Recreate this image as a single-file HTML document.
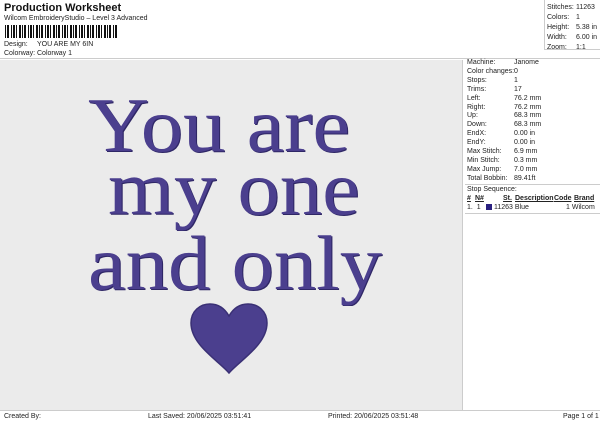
<!DOCTYPE html>
<html><head><style>
*{margin:0;padding:0;box-sizing:border-box}
body{width:600px;height:424px;background:#fff;font-family:"Liberation Sans",sans-serif;font-size:7px;color:#222;position:relative;overflow:hidden}
.a{position:absolute;white-space:nowrap}
#design{position:absolute;left:0;top:60px;width:463px;height:350px;background:#ebebeb;border-right:1px solid #ccc}
.t{position:absolute;font-family:"Liberation Serif",serif;font-size:77px;color:#4b3f8e;white-space:nowrap;line-height:1;text-shadow:1px 1px 0 #2f2766;transform:scaleX(1.1);transform-origin:0 0}
</style></head><body>
<div class="a" style="left:4px;top:2px;font-size:11px;font-weight:bold;color:#111">Production Worksheet</div>
<div class="a" style="left:4px;top:15px">Wilcom EmbroideryStudio – Level 3 Advanced</div>
<svg class="a" style="left:5px;top:25px" width="112" height="13">
<g fill="#111">
<rect x="0" width="1" height="13"/><rect x="2" width="2" height="13"/><rect x="6" width="1" height="13"/><rect x="8" width="2" height="13"/><rect x="11" width="1" height="13"/><rect x="14" width="2" height="13"/><rect x="17" width="1" height="13"/><rect x="19" width="2" height="13"/><rect x="23" width="1" height="13"/><rect x="25" width="2" height="13"/><rect x="28" width="1" height="13"/><rect x="31" width="2" height="13"/><rect x="34" width="1" height="13"/><rect x="36" width="2" height="13"/><rect x="40" width="1" height="13"/><rect x="42" width="2" height="13"/><rect x="45" width="1" height="13"/><rect x="48" width="2" height="13"/><rect x="51" width="1" height="13"/><rect x="53" width="2" height="13"/><rect x="57" width="1" height="13"/><rect x="59" width="2" height="13"/><rect x="62" width="1" height="13"/><rect x="65" width="2" height="13"/><rect x="68" width="1" height="13"/><rect x="70" width="2" height="13"/><rect x="74" width="1" height="13"/><rect x="76" width="2" height="13"/><rect x="79" width="1" height="13"/><rect x="82" width="2" height="13"/><rect x="85" width="1" height="13"/><rect x="87" width="2" height="13"/><rect x="91" width="1" height="13"/><rect x="93" width="2" height="13"/><rect x="96" width="1" height="13"/><rect x="99" width="2" height="13"/><rect x="102" width="1" height="13"/><rect x="104" width="2" height="13"/><rect x="108" width="1" height="13"/><rect x="110" width="2" height="13"/>
</g></svg>
<div class="a" style="left:4px;top:41px">Design:</div><div class="a" style="left:37px;top:41px">YOU ARE MY 6IN</div>
<div class="a" style="left:4px;top:50px">Colorway:</div><div class="a" style="left:37px;top:50px">Colorway 1</div>
<div class="a" style="left:544px;top:0;width:56px;height:50px;border-left:1px solid #ccc;border-bottom:1px solid #ccc"></div>
<div class="a" style="left:547px;top:3px;line-height:10px">Stitches:<br>Colors:<br>Height:<br>Width:<br>Zoom:</div>
<div class="a" style="left:576px;top:3px;line-height:10px">11263<br>1<br>5.38 in<br>6.00 in<br>1:1</div>
<div class="a" style="left:0;top:58px;width:600px;border-top:1px solid #ccc"></div>
<div id="design">
<div class="t" style="left:88px;top:27px">You are</div>
<div class="t" style="left:108px;top:90px">my one</div>
<div class="t" style="left:88px;top:165px">and only</div>
<svg style="position:absolute;left:189px;top:243px" width="80" height="72" viewBox="0 0 80 72"><path d="M40 70 C30 58 2 42 2 20 C2 8 11 1 21 1 C30 1 36 6 40 13 C44 6 50 1 59 1 C69 1 78 8 78 20 C78 42 50 58 40 70Z" fill="#4b3f8e" stroke="#3a3075" stroke-width="1.5"/></svg>
</div>
<div class="a" style="left:467px;top:59px;line-height:8.9px">Machine:<br>Color changes:<br>Stops:<br>Trims:<br>Left:<br>Right:<br>Up:<br>Down:<br>EndX:<br>EndY:<br>Max Stitch:<br>Min Stitch:<br>Max Jump:<br>Total Bobbin:</div>
<div class="a" style="left:514px;top:59px;line-height:8.9px">Janome<br>0<br>1<br>17<br>76.2 mm<br>76.2 mm<br>68.3 mm<br>68.3 mm<br>0.00 in<br>0.00 in<br>6.9 mm<br>0.3 mm<br>7.0 mm<br>89.41ft</div>
<div class="a" style="left:465px;top:184px;width:135px;border-top:1px solid #ccc"></div>
<div class="a" style="left:467px;top:186px">Stop Sequence:</div>
<div class="a" style="left:467px;top:195px;font-weight:bold;text-decoration:underline">#</div>
<div class="a" style="left:475px;top:195px;font-weight:bold;text-decoration:underline">N#</div>
<div class="a" style="left:503px;top:195px;font-weight:bold;text-decoration:underline">St.</div>
<div class="a" style="left:515px;top:195px;font-weight:bold;text-decoration:underline">Description</div>
<div class="a" style="left:554px;top:195px;font-weight:bold;text-decoration:underline">Code</div>
<div class="a" style="left:574px;top:195px;font-weight:bold;text-decoration:underline">Brand</div>
<div class="a" style="left:467px;top:204px">1.&nbsp; 1</div>
<div class="a" style="left:486px;top:204px;width:6px;height:6px;background:#2a2080"></div>
<div class="a" style="left:494px;top:204px">11263 Blue</div>
<div class="a" style="left:566px;top:204px">1 Wilcom</div>
<div class="a" style="left:465px;top:213px;width:135px;border-top:1px solid #ccc"></div>
<div class="a" style="left:0;top:410px;width:600px;border-top:1px solid #ccc"></div>
<div class="a" style="left:4px;top:413px">Created By:</div>
<div class="a" style="left:148px;top:413px">Last Saved: 20/06/2025 03:51:41</div>
<div class="a" style="left:328px;top:413px">Printed: 20/06/2025 03:51:48</div>
<div class="a" style="left:563px;top:413px">Page 1 of 1</div>
</body></html>
